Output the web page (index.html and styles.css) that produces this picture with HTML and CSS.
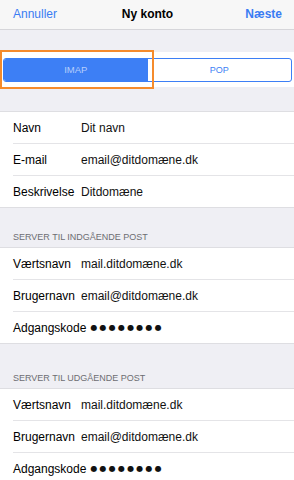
FILE: index.html
```html
<!doctype html>
<html lang="da">
	<head>
		<title>Ny konto</title>
		<meta charset="utf-8">
		<meta name="viewport" content="width=device-width, user-scalable=no, minimum-scale=1.0, maximum-scale=1.0">
		<link rel="stylesheet" href="styles.css">
	</head>

	<body>
		<div class="navbar">
			<span class="nav-btn">Annuller</span>
			<span class="nav-title">Ny konto</span>
			<span class="nav-btn nav-strong">Næste</span>
		</div>

		<div class="segment-band">
			<div class="segment">
				<div class="seg seg-on">IMAP</div>
				<div class="seg">POP</div>
			</div>
			<div class="highlight"></div>
		</div>

		<div class="group group-first">
			<div class="row"><span class="label">Navn</span><span class="value">Dit navn</span></div>
			<div class="row"><span class="label">E-mail</span><span class="value">email@ditdomæne.dk</span></div>
			<div class="row"><span class="label">Beskrivelse</span><span class="value">Ditdomæne</span></div>
		</div>

		<div class="group-title">SERVER TIL INDGÅENDE POST</div>
		<div class="group">
			<div class="row"><span class="label">Værtsnavn</span><span class="value">mail.ditdomæne.dk</span></div>
			<div class="row"><span class="label">Brugernavn</span><span class="value">email@ditdomæne.dk</span></div>
			<div class="row"><span class="label">Adgangskode</span><span class="value dots">●●●●●●●●</span></div>
		</div>

		<div class="group-title group-title-tall">SERVER TIL UDGÅENDE POST</div>
		<div class="group">
			<div class="row"><span class="label">Værtsnavn</span><span class="value">mail.ditdomæne.dk</span></div>
			<div class="row"><span class="label">Brugernavn</span><span class="value">email@ditdomæne.dk</span></div>
			<div class="row"><span class="label">Adgangskode</span><span class="value dots">●●●●●●●●</span></div>
		</div>
	</body>
</html>
```

FILE: styles.css
```css
html, body {
	width:100%;
	height:100%;
	margin:0;
	padding:0;
	overflow:hidden;
	font-family:"Liberation Sans", Arial, Helvetica, sans-serif;
	background:#efeff4;
	color:#000;
}

.navbar {
	height:27px;
	display:grid;
	grid-template-columns:1fr auto 1fr;
	align-items:center;
	padding:0 12px 2px 13px;
	background:#f7f7f7;
	border-bottom:1px solid #d6d6da;
	font-size:12px;
}

.nav-btn {
	color:#3a7cf3;
}

.nav-strong {
	font-weight:bold;
	text-align:right;
}

.nav-title {
	font-weight:bold;
}

.segment-band {
	position:relative;
	margin-top:22px;
	height:35px;
	padding:0 2px 0 3px;
	display:flex;
	align-items:center;
	background:#fff;
}

.segment {
	flex:1;
	display:flex;
	height:22px;
	border:1px solid #3d7ff5;
	border-radius:3px;
	overflow:hidden;
	font-size:9px;
}

.seg {
	flex:1;
	display:flex;
	align-items:center;
	justify-content:center;
	color:#3d7ff5;
}

.seg-on {
	background:#3d7ff5;
	color:#b7cefb;
	font-size:9.5px;
}

.highlight {
	position:absolute;
	left:0;
	top:-2px;
	width:150px;
	height:35px;
	border:2px solid #f58b2c;
}

.group {
	background:#fff;
	border-top:1px solid #dedee2;
	border-bottom:1px solid #dedee2;
}

.group-first {
	margin-top:24px;
}

.row {
	display:flex;
	align-items:center;
	height:31px;
	margin-left:13px;
	border-bottom:1px solid #e4e4e7;
	font-size:12px;
}

.row:last-child {
	border-bottom:none;
}

.label {
	min-width:64px;
	margin-right:4px;
	white-space:nowrap;
}

.value {
	color:#111;
	white-space:nowrap;
}

.dots {
	font-family:"DejaVu Sans", sans-serif;
	font-size:8px;
	letter-spacing:2.2px;
}

.group-title {
	height:39px;
	box-sizing:border-box;
	padding:0 13px 5px;
	display:flex;
	align-items:flex-end;
	font-size:9px;
	color:#6d6d72;
}

.group-title-tall {
	height:44px;
}
```
